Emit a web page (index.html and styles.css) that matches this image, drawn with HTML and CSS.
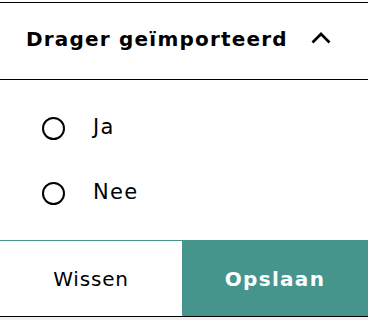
FILE: index.html
```html
<!DOCTYPE html>
<html lang="nl">
<head>
<meta charset="utf-8">
<link rel="stylesheet" href="styles.css">
</head>
<body>
<div class="panel">
  <div class="header">
    <span class="title">Drager geïmporteerd</span>
    <svg class="chevron" width="20" height="12" viewBox="0 0 20 12" aria-hidden="true">
      <polyline points="1.5,10.5 10,2 18.5,10.5" fill="none" stroke="#000" stroke-width="2.7"/>
    </svg>
  </div>
  <div class="options">
    <label class="option"><span class="radio"></span><span class="label">Ja</span></label>
    <label class="option"><span class="radio"></span><span class="label">Nee</span></label>
  </div>
  <div class="actions">
    <button class="btn btn-clear">Wissen</button>
    <button class="btn btn-save">Opslaan</button>
  </div>
</div>
<div class="below"></div>
</body>
</html>
```

FILE: styles.css
```css
html, body {
  margin: 0;
  padding: 0;
  background: #fff;
}
body {
  padding-top: 2px;
  font-family: "DejaVu Sans", "Liberation Sans", sans-serif;
  color: #000;
}
.panel {
  border-top: 1px solid #000;
  border-bottom: 1px solid #000;
}
.header {
  height: 76px;
  border-bottom: 1px solid #000;
  display: flex;
  align-items: center;
  padding-left: 26px;
  gap: 23px;
}
.title {
  font-size: 20px;
  font-weight: 700;
  letter-spacing: 1.2px;
  line-height: 24px;
  margin-top: -4px;
}
.chevron {
  display: block;
  margin-top: -6px;
}
.options {
  display: flex;
  flex-direction: column;
  gap: 42px;
  padding: 37px 0 35px 42px;
}
.option {
  display: flex;
  align-items: center;
  height: 23px;
  gap: 28px;
}
.radio {
  width: 23px;
  height: 23px;
  box-sizing: border-box;
  border: 2.8px solid #000;
  border-radius: 50%;
  flex: none;
}
.label {
  font-size: 21px;
  letter-spacing: 1.3px;
  line-height: 24px;
  margin-bottom: 3px;
}
.actions {
  display: grid;
  grid-template-columns: 182px 1fr;
  border-top: 1px solid #45958d;
}
.btn {
  height: 75px;
  border: 0;
  margin: 0;
  padding: 0;
  font-family: "DejaVu Sans", "Liberation Sans", sans-serif;
  font-size: 20px;
  letter-spacing: 0.8px;
}
.btn-clear {
  background: #fff;
  color: #000;
}
.btn-save {
  background: #45958d;
  color: #fff;
  font-weight: 700;
  letter-spacing: 1.3px;
}
.below {
  height: 10px;
  background: #efefef;
}
```
